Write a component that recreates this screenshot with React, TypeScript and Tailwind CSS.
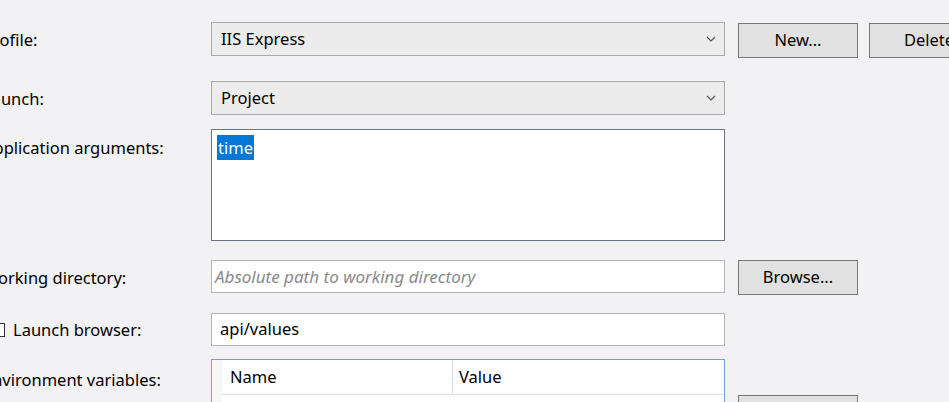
import React from "react";

const Chevron = () => (
    <svg width="10" height="6" viewBox="0 0 10 6" className="shrink-0">
        <path d="M1 1 L5 5 L9 1" fill="none" stroke="#555" strokeWidth="1.2" />
    </svg>
);

const Label = ({ children, className = "" }: { children: React.ReactNode; className?: string }) => (
    <div className={`w-[228px] shrink-0 text-black ${className}`}>{children}</div>
);

const Btn = ({ children, className = "" }: { children: React.ReactNode; className?: string }) => (
    <button className={`h-[35px] w-[120px] shrink-0 border border-[#777] bg-[#e1e1e1] text-[16.5px] text-black ${className}`}>
        {children}
    </button>
);

const Select = ({ value }: { value: string }) => (
    <div className="flex h-[34px] w-[514px] shrink-0 items-center justify-between border border-[#a9a9a9] bg-[#ececec] pl-[9px] pr-[8px]">
        <span>{value}</span>
        <Chevron />
    </div>
);

export default function App() {
    return (
        <div
            className="relative h-[402px] w-[949px] overflow-hidden bg-[#f2f1f3] text-black"
            style={{ fontFamily: '"Noto Sans", "Open Sans", sans-serif' }}
        >
            <div className="ml-[-17px] flex flex-col pt-[22px] text-[16.5px]">
                {/* profile */}
                <div className="flex items-start">
                    <Label className="pt-[6px]">Profile:</Label>
                    <Select value="IIS Express" />
                    <Btn className="ml-[13px] mt-[1px]">New...</Btn>
                    <Btn className="ml-[11px] mt-[1px]">Delete</Btn>
                </div>

                {/* launch */}
                <div className="mt-[23px] flex items-start">
                    <Label className="pt-[6px]">Launch:</Label>
                    <Select value="Project" />
                </div>

                {/* args */}
                <div className="mt-[14px] flex items-start">
                    <Label className="pt-[7px]">Application arguments:</Label>
                    <div className="h-[112px] w-[514px] shrink-0 border border-[#6b7280] bg-white pl-[5px] pt-[7px] leading-[21px]">
                        <span className="bg-[#0078d7] px-[1px] py-[1px] text-white">time</span>
                    </div>
                </div>

                {/* working dir */}
                <div className="mt-[19px] flex items-start">
                    <Label className="pt-[6px]">Working directory:</Label>
                    <div className="flex h-[33px] w-[514px] shrink-0 items-center border border-[#b4b4b4] bg-white pl-[3px] text-[17px] italic text-[#8a8a8a]">
                        Absolute path to working directory
                    </div>
                    <Btn className="ml-[13px]">Browse...</Btn>
                </div>

                {/* launch browser */}
                <div className="mt-[18px] flex items-start">
                    <Label className="flex items-center gap-[8px] pt-[5px]">
                        <span className="ml-[8px] inline-block h-[14px] w-[14px] border border-[#333] bg-white" />
                        Launch browser:
                    </Label>
                    <div className="flex h-[33px] w-[514px] shrink-0 items-center border border-[#b4b4b4] bg-white pl-[8px]">
                        api/values
                    </div>
                </div>

                {/* env vars */}
                <div className="mt-[13px] flex items-start">
                    <Label className="pt-[9px]">Environment variables:</Label>
                    <div className="h-[80px] w-[514px] shrink-0 border border-[#7f9dc8] bg-[#f7f7f9] pl-[10px]">
                        <div className="flex h-[35px] border-b border-[#e0e0e0] bg-white">
                            <div className="w-[231px] border-r border-[#dcdcdc] pl-[8px] pt-[5px]">Name</div>
                            <div className="pl-[6px] pt-[5px]">Value</div>
                        </div>
                        <div className="h-[40px] bg-white" />
                    </div>
                    <Btn className="ml-[13px] mt-[36px]">Add</Btn>
                </div>
            </div>
        </div>
    );
}
